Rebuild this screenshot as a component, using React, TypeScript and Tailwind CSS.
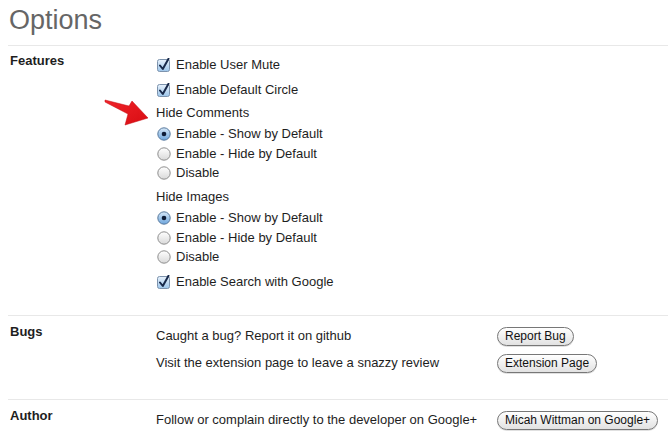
import React from "react";

/* ---------- little aqua-style controls ---------- */
function CheckBox() {
  return (
    <svg width="14" height="14" viewBox="0 0 14 14" className="shrink-0">
      <defs>
        <linearGradient id="cb" x1="0" y1="0" x2="0" y2="1">
          <stop offset="0" stopColor="#e8f2fc" />
          <stop offset="1" stopColor="#9cc5ea" />
        </linearGradient>
      </defs>
      <rect x="0.5" y="1.5" width="12" height="12" rx="2" fill="url(#cb)" stroke="#7d93ad" />
      <path d="M3 7.5 L5.8 11 L11.5 0.8" fill="none" stroke="#18294a" strokeWidth="2" strokeLinecap="round" strokeLinejoin="round" />
    </svg>
  );
}

function Radio({ on }: { on?: boolean }) {
  return (
    <svg width="14" height="14" viewBox="0 0 14 14" className="shrink-0">
      <defs>
        <linearGradient id="ron" x1="0" y1="0" x2="0" y2="1">
          <stop offset="0" stopColor="#d6e8f8" />
          <stop offset="1" stopColor="#6ea6dd" />
        </linearGradient>
        <linearGradient id="roff" x1="0" y1="0" x2="0" y2="1">
          <stop offset="0" stopColor="#ffffff" />
          <stop offset="1" stopColor="#d9d9d9" />
        </linearGradient>
      </defs>
      <circle cx="7" cy="7" r="6.2" fill={on ? "url(#ron)" : "url(#roff)"} stroke={on ? "#58789c" : "#8e8e8e"} />
      {on && <circle cx="7" cy="7" r="2.3" fill="#0f1d38" />}
    </svg>
  );
}

function Pill({ children }: { children: React.ReactNode }) {
  return (
    <button className="h-[19px] rounded-full border border-[#777] bg-gradient-to-b from-white to-[#e2e2e2] px-[7px] text-[12px] leading-none text-[#111] shadow-[0_1px_0_rgba(0,0,0,0.12)]">
      {children}
    </button>
  );
}

/* ---------- data ---------- */
type Row = { kind: "check" | "on" | "off" | "head"; text: string; mt: string };

const features: Row[] = [
  { kind: "check", text: "Enable User Mute", mt: "mt-0" },
  { kind: "check", text: "Enable Default Circle", mt: "mt-[5px]" },
  { kind: "head", text: "Hide Comments", mt: "mt-[3px]" },
  { kind: "on", text: "Enable - Show by Default", mt: "mt-[1px]" },
  { kind: "off", text: "Enable - Hide by Default", mt: "mt-0" },
  { kind: "off", text: "Disable", mt: "-mt-px" },
  { kind: "head", text: "Hide Images", mt: "mt-[4px]" },
  { kind: "on", text: "Enable - Show by Default", mt: "mt-[1px]" },
  { kind: "off", text: "Enable - Hide by Default", mt: "mt-0" },
  { kind: "off", text: "Disable", mt: "-mt-px" },
  { kind: "check", text: "Enable Search with Google", mt: "mt-[5px]" },
];

function FeatureRow({ row }: { row: Row }) {
  if (row.kind === "head") {
    return <div className={`${row.mt} flex h-[20px] items-center`}>{row.text}</div>;
  }
  return (
    <div className={`${row.mt} flex h-[20px] items-center gap-[5px] pl-px`}>
      {row.kind === "check" ? <CheckBox /> : <Radio on={row.kind === "on"} />}
      <span>{row.text}</span>
    </div>
  );
}

export default function App() {
  return (
    <div className="relative h-[444px] w-[668px] overflow-hidden bg-white font-['Liberation_Sans',Arial,sans-serif] text-[13px] text-[#1e1e1e]">
      {/* Title */}
      <h1 className="h-[45px] pl-[9px] pt-[7px] text-[27px] leading-[27px] text-[#666]">Options</h1>

      {/* Features */}
      <section className="ml-[8px] flex border-t border-[#e8e8e8] pb-[23px]">
        <div className="w-[148px] pl-[2px] pt-[5px] font-bold leading-[20px]">Features</div>
        <div className="flex flex-col pt-[9px]">
          {features.map((r, i) => (
            <FeatureRow key={i} row={r} />
          ))}
        </div>
      </section>

      {/* Bugs */}
      <section className="ml-[8px] flex border-t border-[#e8e8e8] pb-[26px]">
        <div className="w-[148px] pl-[2px] pt-[6px] font-bold leading-[20px]">Bugs</div>
        <div className="flex flex-col pt-[10px]">
          <div className="flex h-[20px] items-center">
            <span className="w-[341px]">Caught a bug? Report it on github</span>
            <Pill>Report Bug</Pill>
          </div>
          <div className="mt-[7px] flex h-[20px] items-center">
            <span className="w-[341px]">Visit the extension page to leave a snazzy review</span>
            <Pill>Extension Page</Pill>
          </div>
        </div>
      </section>

      {/* Author */}
      <section className="ml-[8px] flex border-t border-[#e8e8e8]">
        <div className="w-[148px] pl-[2px] pt-[6px] font-bold leading-[20px]">Author</div>
        <div className="flex flex-col pt-[10px]">
          <div className="flex h-[20px] items-center">
            <span className="w-[341px]">Follow or complain directly to the developer on Google+</span>
            <Pill>Micah Wittman on Google+</Pill>
          </div>
        </div>
      </section>

      {/* red annotation arrow */}
      <svg width="56" height="36" viewBox="0 0 56 36" className="absolute left-[100px] top-[95px]">
        <defs>
          <linearGradient id="ar" x1="0" y1="0" x2="1" y2="1">
            <stop offset="0" stopColor="#f0242a" />
            <stop offset="1" stopColor="#d80c12" />
          </linearGradient>
        </defs>
        <polygon
          points="5,5 29,11 32,6 48,23 25,30 28,19 5,7"
          fill="url(#ar)"
          stroke="#c40a10"
          strokeWidth="0.5"
          strokeLinejoin="round"
        />
      </svg>
    </div>
  );
}
